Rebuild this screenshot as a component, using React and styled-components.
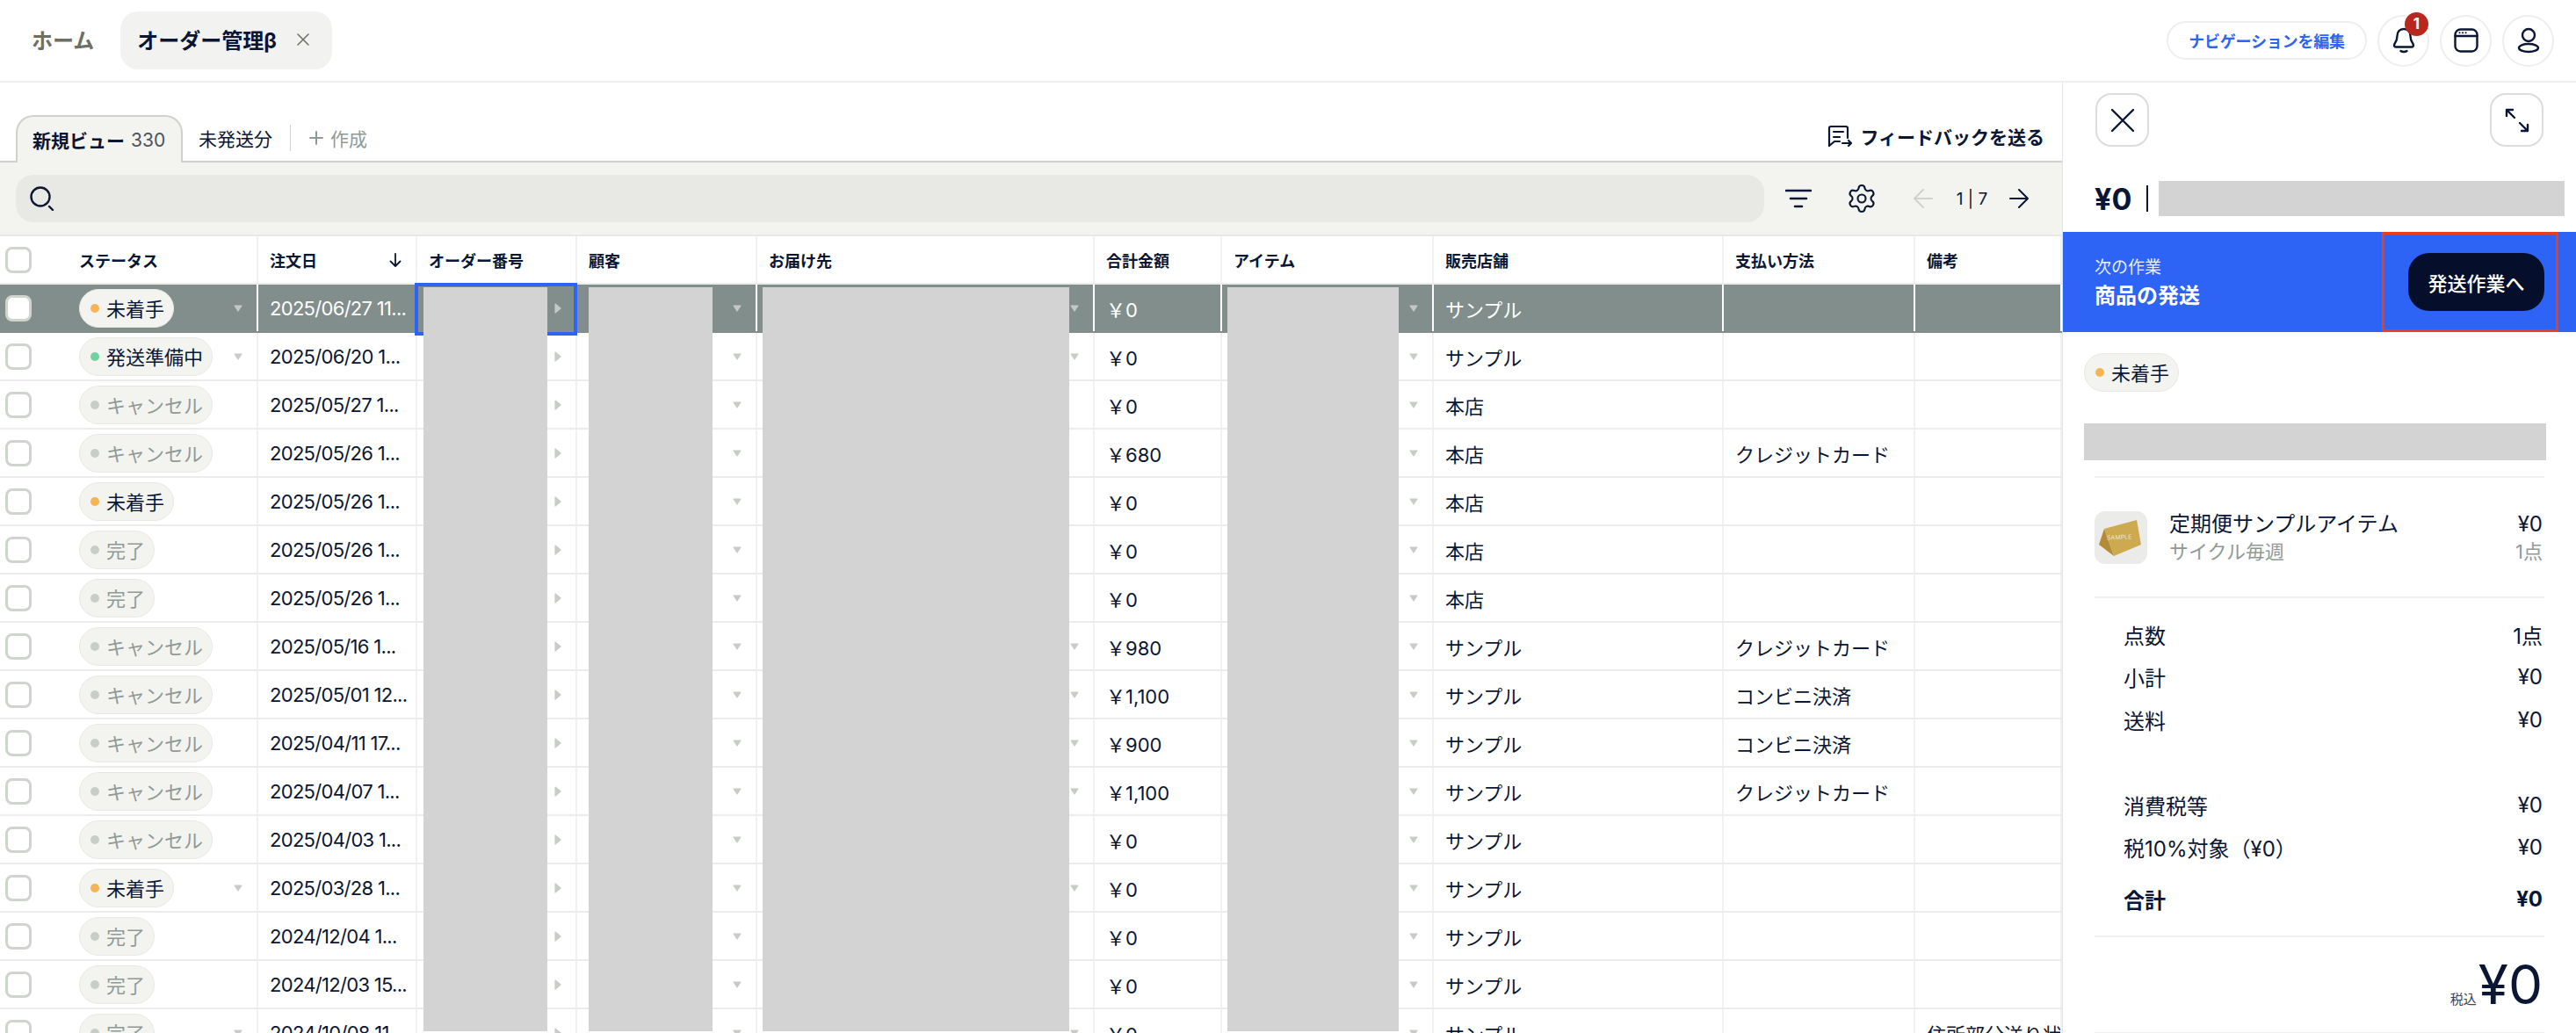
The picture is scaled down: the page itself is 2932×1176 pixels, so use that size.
import React from "react";
import styled, { createGlobalStyle } from "styled-components";
import { Settings } from "lucide-react";

const GlobalStyle = createGlobalStyle`
  html, body {
    margin: 0;
    padding: 0;
    background: #fff;
    overflow: hidden;
  }
  body {
    font-family: Inter, "Noto Sans CJK JP", sans-serif;
    color: #0a1633;
  }
  * {
    box-sizing: border-box;
  }
`;

const Page = styled.div`
  width: 2932px;
  height: 1176px;
  overflow: hidden;
  display: flex;
  flex-direction: column;
`;

/* top navigation */
const TopBar = styled.header`
  height: 94px;
  flex: none;
  display: flex;
  align-items: center;
  padding: 0 25px 0 36px;
  border-bottom: 2px solid #eeeeec;
`;

const HomeLink = styled.span`
  font-size: 24px;
  font-weight: 700;
  color: #6e6e64;
  margin: -3px 30px 0 0;
`;

const PageTab = styled.div`
  width: 241px;
  height: 66px;
  margin-top: -1px;
  border-radius: 20px;
  background: #f2f2f0;
  display: flex;
  align-items: center;
  justify-content: space-between;
  padding: 0 25px 2px 19px;
  font-size: 24px;
  font-weight: 700;
`;

const NavActions = styled.div`
  margin-left: auto;
  display: flex;
  align-items: center;
  gap: 12px;
`;

const EditNavButton = styled.button`
  width: 228px;
  height: 44px;
  border: 2px solid #eeeeec;
  border-radius: 22px;
  background: #fff;
  color: #2d64f6;
  font-family: inherit;
  font-size: 18px;
  font-weight: 700;
  letter-spacing: -0.2px;
  padding: 0;
`;

const RoundButton = styled.div`
  position: relative;
  width: 59px;
  height: 59px;
  border: 2px solid #eeeeec;
  border-radius: 50%;
  display: flex;
  align-items: center;
  justify-content: center;
`;

const Badge = styled.span`
  position: absolute;
  top: -5px;
  right: -1px;
  width: 27px;
  height: 27px;
  border-radius: 50%;
  background: #b8281e;
  color: #fff;
  font-size: 17px;
  font-weight: 700;
  display: flex;
  align-items: center;
  justify-content: center;
`;

/* body */
const Content = styled.div`
  flex: 1;
  min-height: 0;
  display: flex;
`;

const Main = styled.main`
  width: 2347px;
  flex: none;
  display: flex;
  flex-direction: column;
`;

const ViewTabs = styled.div`
  height: 91px;
  flex: none;
  display: flex;
  align-items: flex-end;
  padding-left: 18px;
  border-bottom: 2px solid #cfd2cc;
`;

const ViewTab = styled.div`
  width: 190px;
  height: 54px;
  margin-bottom: -2px;
  padding-left: 17px;
  display: flex;
  align-items: center;
  gap: 7px;
  background: #f3f4f0;
  border: 2px solid #cfd2cc;
  border-bottom: none;
  border-radius: 20px 20px 0 0;
  font-size: 21px;
  font-weight: 700;
`;

const TabCount = styled.span`
  font-weight: 400;
  color: #4a5560;
`;

const PlainTab = styled.div`
  height: 52px;
  margin-left: 18px;
  display: flex;
  align-items: center;
  font-size: 21px;
`;

const TabDivider = styled.span`
  width: 1px;
  height: 30px;
  margin: 0 0 11px 20px;
  background: #cfd2cc;
`;

const CreateTab = styled.div`
  height: 52px;
  margin-left: 21px;
  display: flex;
  align-items: center;
  gap: 8px;
  font-size: 21px;
  color: #8f9a97;
`;

const Feedback = styled.div`
  margin: 0 20px 13px auto;
  display: flex;
  align-items: center;
  gap: 9px;
  font-size: 21px;
  font-weight: 700;
`;

const Toolbar = styled.div`
  height: 84px;
  flex: none;
  display: flex;
  align-items: center;
  padding-left: 18px;
  background: #f3f4f0;
  border-bottom: 2px solid #e8e8e4;
`;

const SearchBox = styled.div`
  width: 1990px;
  height: 54px;
  border-radius: 20px;
  background: #e8e9e4;
  display: flex;
  align-items: center;
  padding-left: 16px;
`;

const ToolIcon = styled.span`
  display: flex;
  margin-left: ${(p) => p.$gap}px;
`;

const PagerText = styled.span`
  margin-left: 26px;
  width: 37px;
  font-size: 19px;
  white-space: nowrap;
  text-align: center;
`;

/* table */
const COLUMNS = "294px 181px 182px 205px 384px 145px 241px 330px 218px 167px";

const Table = styled.div`
  position: relative;
  flex: 1;
  min-height: 0;
  overflow: hidden;
`;

const Row = styled.div`
  height: 55px;
  display: grid;
  grid-template-columns: ${COLUMNS};
  grid-template-rows: 53px;
  background: ${(p) => (p.$selected ? "#828e8c" : "#fff")};
  color: ${(p) => (p.$selected ? "#fff" : "#0a1633")};
  border-bottom: 2px solid ${(p) => (p.$selected ? "#828e8c" : "#ececea")};
`;

const Cell = styled.div`
  position: relative;
  min-width: 0;
  display: flex;
  align-items: center;
  justify-content: space-between;
  padding: 0 16px 0 13px;
  font-size: 22px;
  white-space: nowrap;
  overflow: ${(p) => (p.$focused ? "visible" : "hidden")};
  border-right: 2px solid ${(p) => (p.$selected ? "#fff" : "#f1f1ef")};
  &:last-child {
    padding-right: 0;
    justify-content: flex-start;
  }
`;

const DateCell = styled(Cell)`
  letter-spacing: -0.7px;
`;

const CaretCell = styled(Cell)`
  justify-content: flex-end;
`;

const StatusCell = styled(Cell)`
  padding-left: 6px;
  justify-content: flex-start;
`;

const HeaderCell = styled(Cell)`
  font-size: 18px;
  font-weight: 700;
`;

const HeaderStatusCell = styled(HeaderCell)`
  padding-left: 6px;
  justify-content: flex-start;
`;

const Check = styled.span`
  width: 30px;
  height: 30px;
  flex: none;
  margin-right: 54px;
  border: 3px solid #d0d4ce;
  border-radius: 8px;
  background: #fff;
`;

const Pill = styled.span`
  height: 44px;
  flex: none;
  display: inline-flex;
  align-items: center;
  gap: 8px;
  padding: 0 10px 2px 12px;
  border-radius: 22px;
  border: 1px solid #e8e9e4;
  background: #f3f4f0;
  font-size: 22px;
  color: ${(p) => (p.$muted ? "#8f9a97" : "#0a1633")};
`;

const Dot = styled.i`
  width: 10px;
  height: 10px;
  margin-top: 2px;
  border-radius: 50%;
  background: ${(p) => p.$color};
`;

const StatusCaret = styled.span`
  display: flex;
  margin-left: auto;
`;

const FocusRing = styled.span`
  position: absolute;
  top: -2px;
  left: -3px;
  right: -2px;
  height: 60px;
  border: 4px solid #2d64f6;
  z-index: 1;
  pointer-events: none;
`;

const Redacted = styled.div`
  position: absolute;
  top: 58px;
  left: ${(p) => p.$left}px;
  width: ${(p) => p.$width}px;
  height: 847px;
  background: #d3d3d3;
  z-index: 2;
`;

/* side panel */
const Side = styled.aside`
  flex: 1;
  min-width: 0;
  border-left: 1px solid #e4e4e2;
`;

const SideTools = styled.div`
  display: flex;
  justify-content: space-between;
  padding: 12px 37px 0 37px;
`;

const SquareButton = styled.div`
  width: 61px;
  height: 61px;
  border: 2px solid #dcdcda;
  border-radius: 18px;
  display: flex;
  align-items: center;
  justify-content: center;
`;

const PriceRow = styled.div`
  height: 40px;
  margin-top: 39px;
  padding: 0 13px 0 36px;
  display: flex;
  align-items: center;
`;

const PriceValue = styled.span`
  font-size: 34px;
  font-weight: 700;
`;

const PriceDivider = styled.span`
  width: 2px;
  height: 30px;
  margin: 0 12px 0 17px;
  background: #0a1633;
`;

const GrayBar = styled.div`
  flex: 1;
  height: ${(p) => p.$height}px;
  background: #d3d3d3;
`;

const NextBand = styled.div`
  position: relative;
  height: 114px;
  margin-top: 18px;
  padding: 0 36px;
  background: #2d64f6;
  color: #fff;
  display: flex;
  align-items: center;
  justify-content: space-between;
`;

const NextLabel = styled.div`
  font-size: 19px;
  line-height: 28px;
  margin-top: 4px;
  opacity: 0.9;
`;

const NextTitle = styled.div`
  font-size: 24px;
  font-weight: 700;
  line-height: 36px;
  margin-top: 0;
`;

const NextButton = styled.button`
  width: 155px;
  height: 66px;
  border: none;
  border-radius: 24px;
  background: #050f2c;
  color: #fff;
  font-family: inherit;
  font-size: 22px;
  font-weight: 500;
  padding: 0;
`;

const HighlightBox = styled.span`
  position: absolute;
  top: 0;
  right: 20px;
  width: 201px;
  height: 114px;
  border: 3px solid #e8401c;
  pointer-events: none;
`;

const SidePillRow = styled.div`
  margin-top: 24px;
  padding-left: 24px;
`;

const WideGray = styled.div`
  margin: 36px 34px 0 24px;
  height: 42px;
  background: #d3d3d3;
`;

const Section = styled.div`
  margin: 18px 36px 0 36px;
  border-top: 2px solid #f0f0ee;
`;

const Product = styled.div`
  display: flex;
  align-items: flex-start;
  padding: 38px 2px 35px 0;
  border-bottom: 2px solid #f0f0ee;
`;

const ProductText = styled.div`
  flex: 1;
  margin-left: 25px;
`;

const ProductPrice = styled.div`
  text-align: right;
`;

const LineMain = styled.div`
  height: 30px;
  line-height: 30px;
  font-size: 24px;
`;

const LineSub = styled.div`
  height: 32px;
  line-height: 32px;
  font-size: 22px;
  color: #8f9a97;
`;

const Summary = styled.div`
  padding: 17px 2px 17px 33px;
  border-bottom: 2px solid #f0f0ee;
`;

const SummaryRow = styled.div`
  height: 48.6px;
  display: flex;
  align-items: center;
  justify-content: space-between;
  font-size: 24px;
  font-weight: ${(p) => (p.$bold ? 700 : 400)};
  margin-top: ${(p) => p.$top || 0}px;
`;

const GrandTotal = styled.div`
  height: 110px;
  padding: 19px 2px 0 0;
  display: flex;
  align-items: baseline;
  justify-content: flex-end;
  border-bottom: 2px solid #f0f0ee;
`;

const TaxNote = styled.span`
  font-size: 15px;
  margin-right: 2px;
  color: #3a4456;
`;

const GrandValue = styled.span`
  font-size: 62px;
  line-height: 70px;
`;

const ORANGE = "#f6b454";
const GREEN = "#6fd2a0";
const GREY = "#c9cdc8";

const YEN = "\uFFE5";

const STATUS = {
  todo: { label: "未着手", color: ORANGE },
  prep: { label: "発送準備中", color: GREEN },
  cancel: { label: "キャンセル", color: GREY, muted: true },
  done: { label: "完了", color: GREY, muted: true },
};

const CARD = "クレジットカード";
const CONV = "コンビニ決済";

const ROWS = [
  { status: "todo", date: "2025/06/27 11...", total: "0", shop: "サンプル", pay: "", caret: true, addr: true },
  { status: "prep", date: "2025/06/20 1...", total: "0", shop: "サンプル", pay: "", caret: true, addr: true },
  { status: "cancel", date: "2025/05/27 1...", total: "0", shop: "本店", pay: "" },
  { status: "cancel", date: "2025/05/26 1...", total: "680", shop: "本店", pay: CARD },
  { status: "todo", date: "2025/05/26 1...", total: "0", shop: "本店", pay: "" },
  { status: "done", date: "2025/05/26 1...", total: "0", shop: "本店", pay: "" },
  { status: "done", date: "2025/05/26 1...", total: "0", shop: "本店", pay: "" },
  { status: "cancel", date: "2025/05/16 1...", total: "980", shop: "サンプル", pay: CARD, addr: true },
  { status: "cancel", date: "2025/05/01 12...", total: "1,100", shop: "サンプル", pay: CONV, addr: true },
  { status: "cancel", date: "2025/04/11 17...", total: "900", shop: "サンプル", pay: CONV, addr: true },
  { status: "cancel", date: "2025/04/07 1...", total: "1,100", shop: "サンプル", pay: CARD, addr: true },
  { status: "cancel", date: "2025/04/03 1...", total: "0", shop: "サンプル", pay: "" },
  { status: "todo", date: "2025/03/28 1...", total: "0", shop: "サンプル", pay: "", caret: true, addr: true },
  { status: "done", date: "2024/12/04 1...", total: "0", shop: "サンプル", pay: "" },
  { status: "done", date: "2024/12/03 15...", total: "0", shop: "サンプル", pay: "" },
  { status: "done", date: "2024/10/08 11...", total: "0", shop: "サンプル", pay: "", caret: true, addr: true, note: "住所部分送り状の記載" },
];

const Stroke = ({ w, h, sw = 2.4, color = "#0a1633", children }) => (
  <svg width={w} height={h} viewBox={`0 0 ${w} ${h}`} fill="none" stroke={color} strokeWidth={sw} strokeLinecap="round" strokeLinejoin="round">
    {children}
  </svg>
);

const CaretDown = ({ selected }) => (
  <svg width="10" height="8" viewBox="0 0 10 8">
    <path d="M1 1h8L5 7z" fill={selected ? "#c4c9c6" : "#c8ccc6"} stroke={selected ? "#c4c9c6" : "#c8ccc6"} strokeWidth="1.2" strokeLinejoin="round" />
  </svg>
);

const CaretRight = ({ selected }) => (
  <svg width="8" height="12" viewBox="0 0 8 12">
    <path d="M1 1l6 5-6 5z" fill={selected ? "#c4c9c6" : "#c8ccc6"} stroke={selected ? "#c4c9c6" : "#c8ccc6"} strokeWidth="1.2" strokeLinejoin="round" />
  </svg>
);

const StatusPill = ({ status }) => {
  const s = STATUS[status];
  return (
    <Pill $muted={s.muted}>
      <Dot $color={s.color} />
      {s.label}
    </Pill>
  );
};

const ProductThumb = () => (
  <svg width="60" height="60" viewBox="0 0 60 60">
    <rect width="60" height="60" rx="12" fill="#ebebe9" />
    <path d="M11 20 48 10 53 38 22 51z" fill="#cda94f" />
    <path d="M11 20 5 38 22 51z" fill="#b48c38" />
    <text x="14" y="32" fontSize="7" fill="#ece3c6" fontFamily="Inter, sans-serif" transform="rotate(-2 30 30)">
      SAMPLE
    </text>
  </svg>
);

const App = () => (
  <Page>
    <GlobalStyle />
    <TopBar>
      <HomeLink>ホーム</HomeLink>
      <PageTab>
        オーダー管理β
        <Stroke w={16} h={16} sw={1.5} color="#6e6e64">
          <path d="M2 2l12 12M14 2L2 14" />
        </Stroke>
      </PageTab>
      <NavActions>
        <EditNavButton>ナビゲーションを編集</EditNavButton>
        <RoundButton>
          <Stroke w={28} h={30}>
            <path d="M14 2c-5 0-7.500 3.600-7.500 8 0 4-.8 6-3 9-1 1.600-.5 3.500 1.500 3.500h18c2 0 2.500-1.900 1.500-3.500-2.200-3-3-5-3-9 0-4.400-2.500-8-7.500-8z" />
            <path d="M10.500 27c1.800 1.400 5.200 1.400 7 0" />
          </Stroke>
          <Badge>1</Badge>
        </RoundButton>
        <RoundButton>
          <Stroke w={28} h={28}>
            <rect x="1.500" y="1.500" width="25" height="25" rx="6" />
            <path d="M1.500 9h25" />
            <path d="M6.500 5.300h.1M10 5.300h.1M13.500 5.300h.1" strokeWidth="2" />
          </Stroke>
        </RoundButton>
        <RoundButton>
          <Stroke w={26} h={30}>
            <circle cx="13" cy="9" r="7" />
            <ellipse cx="13" cy="23.500" rx="11" ry="4.500" />
          </Stroke>
        </RoundButton>
      </NavActions>
    </TopBar>

    <Content>
      <Main>
        <ViewTabs>
          <ViewTab>
            新規ビュー
            <TabCount>330</TabCount>
          </ViewTab>
          <PlainTab>未発送分</PlainTab>
          <TabDivider />
          <CreateTab>
            <Stroke w={16} h={16} sw={2} color="#8f9a97">
              <path d="M8 1v14M1 8h14" />
            </Stroke>
            作成
          </CreateTab>
          <Feedback>
            <Stroke w={28} h={26} sw={2.2}>
              <path d="M2 24V4a2 2 0 0 1 2-2h17a2 2 0 0 1 2 2v11" />
              <path d="M2 24l6-5h6" />
              <path d="M7 8h11M7 14h7" />
              <path d="M17 21h10M24 18l3 3-3 3" />
            </Stroke>
            フィードバックを送る
          </Feedback>
        </ViewTabs>

        <Toolbar>
          <SearchBox>
            <Stroke w={28} h={28} sw={2.4}>
              <circle cx="12" cy="12" r="10.500" />
              <path d="M22 23l4 4" />
            </Stroke>
          </SearchBox>
          <ToolIcon $gap={24}>
            <Stroke w={30} h={22} sw={2.6}>
              <path d="M1 2h28M6 11h18M11 20h8" />
            </Stroke>
          </ToolIcon>
          <ToolIcon $gap={39}>
            <Settings size={36} strokeWidth={1.4} color="#0a1633" />
          </ToolIcon>
          <ToolIcon $gap={41}>
            <Stroke w={22} h={22} sw={2} color="#cfd2cc">
              <path d="M21 11H1M11 1L1 11l10 10" />
            </Stroke>
          </ToolIcon>
          <PagerText>1 | 7</PagerText>
          <ToolIcon $gap={24}>
            <Stroke w={22} h={22} sw={2}>
              <path d="M1 11h20M11 1l10 10-10 10" />
            </Stroke>
          </ToolIcon>
        </Toolbar>

        <Table>
          <Row>
            <HeaderStatusCell>
              <Check />
              ステータス
            </HeaderStatusCell>
            <HeaderCell>
              注文日
              <Stroke w={14} h={16} sw={1.8}>
                <path d="M7 1v14M1.500 9.500L7 15l5.500-5.500" />
              </Stroke>
            </HeaderCell>
            <HeaderCell>オーダー番号</HeaderCell>
            <HeaderCell>顧客</HeaderCell>
            <HeaderCell>お届け先</HeaderCell>
            <HeaderCell>合計金額</HeaderCell>
            <HeaderCell>アイテム</HeaderCell>
            <HeaderCell>販売店舗</HeaderCell>
            <HeaderCell>支払い方法</HeaderCell>
            <HeaderCell>備考</HeaderCell>
          </Row>
          {ROWS.map((row, i) => {
            const selected = i === 0;
            return (
              <Row key={i} $selected={selected}>
                <StatusCell $selected={selected}>
                  <Check />
                  <StatusPill status={row.status} />
                  {row.caret && (
                    <StatusCaret>
                      <CaretDown selected={selected} />
                    </StatusCaret>
                  )}
                </StatusCell>
                <DateCell $selected={selected}>{row.date}</DateCell>
                <CaretCell $selected={selected} $focused={selected}>
                  <CaretRight selected={selected} />
                  {selected && <FocusRing />}
                </CaretCell>
                <CaretCell $selected={selected}>
                  <CaretDown selected={selected} />
                </CaretCell>
                <CaretCell $selected={selected}>
                  {row.addr && <CaretDown selected={selected} />}
                </CaretCell>
                <Cell $selected={selected}>
                  {YEN}
                  {row.total}
                </Cell>
                <CaretCell $selected={selected}>
                  <CaretDown selected={selected} />
                </CaretCell>
                <Cell $selected={selected}>{row.shop}</Cell>
                <Cell $selected={selected}>{row.pay}</Cell>
                <Cell $selected={selected}>{row.note}</Cell>
              </Row>
            );
          })}
          <Redacted $left={482} $width={141} />
          <Redacted $left={670} $width={141} />
          <Redacted $left={868} $width={349} />
          <Redacted $left={1397} $width={195} />
        </Table>
      </Main>

      <Side>
        <SideTools>
          <SquareButton>
            <Stroke w={28} h={28} sw={2.4}>
              <path d="M2 2l24 24M26 2L2 26" />
            </Stroke>
          </SquareButton>
          <SquareButton>
            <Stroke w={28} h={28} sw={2.4}>
              <path d="M2 9V2h7M2 2l9 9M26 19v7h-7M26 26l-9-9" />
            </Stroke>
          </SquareButton>
        </SideTools>

        <PriceRow>
          <PriceValue>¥0</PriceValue>
          <PriceDivider />
          <GrayBar $height={40} />
        </PriceRow>

        <NextBand>
          <div>
            <NextLabel>次の作業</NextLabel>
            <NextTitle>商品の発送</NextTitle>
          </div>
          <NextButton>発送作業へ</NextButton>
          <HighlightBox />
        </NextBand>

        <SidePillRow>
          <StatusPill status="todo" />
        </SidePillRow>
        <WideGray />

        <Section>
          <Product>
            <ProductThumb />
            <ProductText>
              <LineMain>定期便サンプルアイテム</LineMain>
              <LineSub>サイクル毎週</LineSub>
            </ProductText>
            <ProductPrice>
              <LineMain>¥0</LineMain>
              <LineSub>1点</LineSub>
            </ProductPrice>
          </Product>

          <Summary>
            <SummaryRow>
              <span>点数</span>
              <span>1点</span>
            </SummaryRow>
            <SummaryRow>
              <span>小計</span>
              <span>¥0</span>
            </SummaryRow>
            <SummaryRow>
              <span>送料</span>
              <span>¥0</span>
            </SummaryRow>
            <SummaryRow $top={48}>
              <span>消費税等</span>
              <span>¥0</span>
            </SummaryRow>
            <SummaryRow>
              <span>税10%対象（¥0）</span>
              <span>¥0</span>
            </SummaryRow>
            <SummaryRow $top={10} $bold>
              <span>合計</span>
              <span>¥0</span>
            </SummaryRow>
          </Summary>

          <GrandTotal>
            <TaxNote>税込</TaxNote>
            <GrandValue>¥0</GrandValue>
          </GrandTotal>
        </Section>
      </Side>
    </Content>
  </Page>
);

export default App;
